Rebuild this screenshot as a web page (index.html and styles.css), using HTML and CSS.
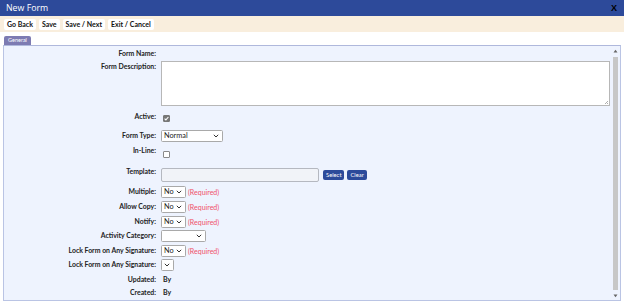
FILE: index.html
```html
<!DOCTYPE html>
<html>
<head>
<meta charset="utf-8">
<link rel="stylesheet" href="styles.css">
</head>
<body>
<div class="title"><span>New Form</span><span class="close">X</span></div>
<div class="toolbar">
  <span class="btn">Go Back</span>
  <span class="btn">Save</span>
  <span class="btn">Save / Next</span>
  <span class="btn">Exit / Cancel</span>
</div>
<div class="tabs"><span class="tab">General</span></div>
<div class="panel">
  <div class="form">
    <div class="row r-name"><div class="lbl">Form Name:</div></div>
    <div class="row r-desc"><div class="lbl">Form Description:</div><div class="textarea"><svg class="grip" width="5" height="5" viewBox="0 0 5 5"><path d="M4 1L1 4M4 3L3 4" stroke="#999" stroke-width="0.8"/></svg></div></div>
    <div class="row r-active"><div class="lbl">Active:</div><span class="cb checked"><svg width="7" height="7" viewBox="0 0 7 7"><path d="M1.6 3.6L2.9 4.9L5.4 2" stroke="#fff" stroke-width="1.1" fill="none"/></svg></span></div>
    <div class="row r-type"><div class="lbl">Form Type:</div><span class="sel w-type">Normal<svg class="chev" width="6" height="4" viewBox="0 0 6 4"><path d="M0.8 0.8L3 3L5.2 0.8" stroke="#333" stroke-width="1" fill="none"/></svg></span></div>
    <div class="row r-inline"><div class="lbl">In-Line:</div><span class="cb"></span></div>
    <div class="row r-tpl"><div class="lbl">Template:</div><span class="input"></span><span class="sbtn">Select</span><span class="sbtn">Clear</span></div>
    <div class="row r-yn r-multi"><div class="lbl">Multiple:</div><span class="sel w-no">No<svg class="chev" width="6" height="4" viewBox="0 0 6 4"><path d="M0.8 0.8L3 3L5.2 0.8" stroke="#333" stroke-width="1" fill="none"/></svg></span><span class="req">(Required)</span></div>
    <div class="row r-yn r-copy"><div class="lbl">Allow Copy:</div><span class="sel w-no">No<svg class="chev" width="6" height="4" viewBox="0 0 6 4"><path d="M0.8 0.8L3 3L5.2 0.8" stroke="#333" stroke-width="1" fill="none"/></svg></span><span class="req">(Required)</span></div>
    <div class="row r-yn r-notify"><div class="lbl">Notify:</div><span class="sel w-no">No<svg class="chev" width="6" height="4" viewBox="0 0 6 4"><path d="M0.8 0.8L3 3L5.2 0.8" stroke="#333" stroke-width="1" fill="none"/></svg></span><span class="req">(Required)</span></div>
    <div class="row r-yn r-cat"><div class="lbl">Activity Category:</div><span class="sel w-cat"><svg class="chev" width="6" height="4" viewBox="0 0 6 4"><path d="M0.8 0.8L3 3L5.2 0.8" stroke="#333" stroke-width="1" fill="none"/></svg></span></div>
    <div class="row r-yn r-lock"><div class="lbl">Lock Form on Any Signature:</div><span class="sel w-no">No<svg class="chev" width="6" height="4" viewBox="0 0 6 4"><path d="M0.8 0.8L3 3L5.2 0.8" stroke="#333" stroke-width="1" fill="none"/></svg></span><span class="req">(Required)</span></div>
    <div class="row r-yn r-lock2"><div class="lbl">Lock Form on Any Signature:</div><span class="sel w-empty"><svg class="chev" width="6" height="4" viewBox="0 0 6 4"><path d="M0.8 0.8L3 3L5.2 0.8" stroke="#333" stroke-width="1" fill="none"/></svg></span></div>
    <div class="row r-upd"><div class="lbl">Updated:</div><span class="val">By</span></div>
    <div class="row r-crt"><div class="lbl">Created:</div><span class="val">By</span></div>
  </div>
  <div class="scroll">
    <svg class="arr" width="5" height="4" viewBox="0 0 5 4"><path d="M0.5 3.5L2.5 0.8L4.5 3.5Z" fill="#666"/></svg>
    <div class="track"></div>
    <svg class="arr" width="5" height="4" viewBox="0 0 5 4"><path d="M0.5 0.5L2.5 3.2L4.5 0.5Z" fill="#666"/></svg>
  </div>
</div>
</body>
</html>
```
FILE: styles.css
```css
* { box-sizing: border-box; }
html, body { margin: 0; padding: 0; background: #fff; }
body { width: 624px; height: 304px; overflow: hidden; font-family: "Lato", "Open Sans", sans-serif; }

.title {
  height: 16px;
  background: #2D4A9A;
  color: #fff;
  font-family: "Open Sans", sans-serif;
  font-size: 8.8px;
  line-height: 16px;
  padding: 0 6px;
  display: flex;
  justify-content: space-between;
}
.close { font-weight: bold; color: #000; font-size: 9px; font-family: "Liberation Sans", sans-serif; padding-right: 1px; }

.toolbar {
  height: 16px;
  background: #F9EEDD;
  display: flex;
  align-items: center;
  gap: 3px;
  padding: 0 4px;
}
.btn {
  background: #fff;
  border-radius: 2px;
  height: 11px;
  line-height: 11px;
  font-size: 7px;
  font-weight: bold;
  color: #111;
  padding: 0 3px;
}

.tabs { height: 13px; padding: 4px 0 0 4px; display: flex; align-items: flex-start; }
.tab {
  display: block;
  width: 27px;
  height: 9px;
  background: #7D7BB2;
  color: #fff;
  font-size: 5.5px;
  line-height: 9px;
  text-align: center;
  border-radius: 2px 2px 0 0;
}

.panel {
  margin: 0 3px 0 3px;
  height: 256px;
  border: 1px solid #BAC4E4;
  border-top-color: #AFB8DC;
  background: #EEF3FE;
  display: flex;
}
.form { flex: 1; padding-top: 2px; }
.row { display: flex; align-items: flex-start; }
.lbl {
  width: 152px;
  text-align: right;
  font-size: 6.9px;
  font-weight: bold;
  line-height: 10px;
  color: #222;
  margin-right: 5px;
  flex: none;
}
.r-name { height: 10px; }
.r-desc { height: 45px; margin-top: 3px; }
.textarea {
  width: 449px;
  height: 45px;
  background: #fff;
  border: 1px solid #B7B7B7;
  position: relative;
}
.grip { position: absolute; right: 0; bottom: 0; }
.r-active { height: 10px; margin-top: 5px; }
.cb {
  width: 7px; height: 7px;
  border: 1px solid #8A8A8A;
  border-radius: 1px;
  background: #fff;
  margin: 4px 0 0 2px;
  display: flex;
}
.cb.checked { background: #777; border-color: #777; }
.cb svg { margin: -1px; }
.r-type { height: 12px; margin-top: 9px; }
.sel {
  height: 12px;
  background: #fff;
  border: 1px solid #A9A9A9;
  border-radius: 1.5px;
  font-size: 7.3px;
  line-height: 10px;
  color: #222;
  padding: 0 3px 0 2px;
  display: flex;
  align-items: center;
  flex: none;
}
.chev { margin-left: auto; }
.w-type { width: 62px; }
.w-no { width: 25px; }
.w-cat { width: 45px; }
.w-empty { width: 13px; padding: 0 3px 0 0; }
.r-inline { height: 12px; margin-top: 3px; }
.r-inline .cb { margin-top: 6px; }
.r-tpl { height: 16px; margin-top: 9px; }
.input {
  width: 158px; height: 14px;
  margin-top: 2px;
  background: #F1F3F8;
  border: 1px solid #B5B8C0;
  border-radius: 2px;
  flex: none;
}
.sbtn {
  height: 10px;
  margin-top: 4px;
  margin-left: 4px;
  background: #2C4A9A;
  color: #fff;
  font-size: 5.8px;
  line-height: 10px;
  padding: 0 3px;
  border-radius: 2px;
}
.sbtn + .sbtn { margin-left: 3px; }
.r-yn { height: 12px; }
.r-multi { margin-top: 4px; }
.r-copy { margin-top: 3px; }
.r-notify { margin-top: 3px; }
.r-cat { margin-top: 2px; }
.r-lock { margin-top: 3px; }
.r-lock2 { margin-top: 2px; }
.req { color: #F0506A; font-size: 7px; line-height: 12px; margin-left: 2px; }
.r-upd { height: 10px; margin-top: 3px; }
.r-crt { height: 10px; margin-top: 3px; }
.val { font-size: 7px; font-weight: bold; line-height: 10px; margin-left: 2px; color: #222; }

.scroll {
  width: 7px;
  display: flex;
  flex-direction: column;
  align-items: center;
  padding: 3px 0 2px;
  margin-right: 1px;
}
.arr { flex: none; }
.track { flex: 1; width: 5px; background: #C7C7C7; margin: 4px 0; }
```
